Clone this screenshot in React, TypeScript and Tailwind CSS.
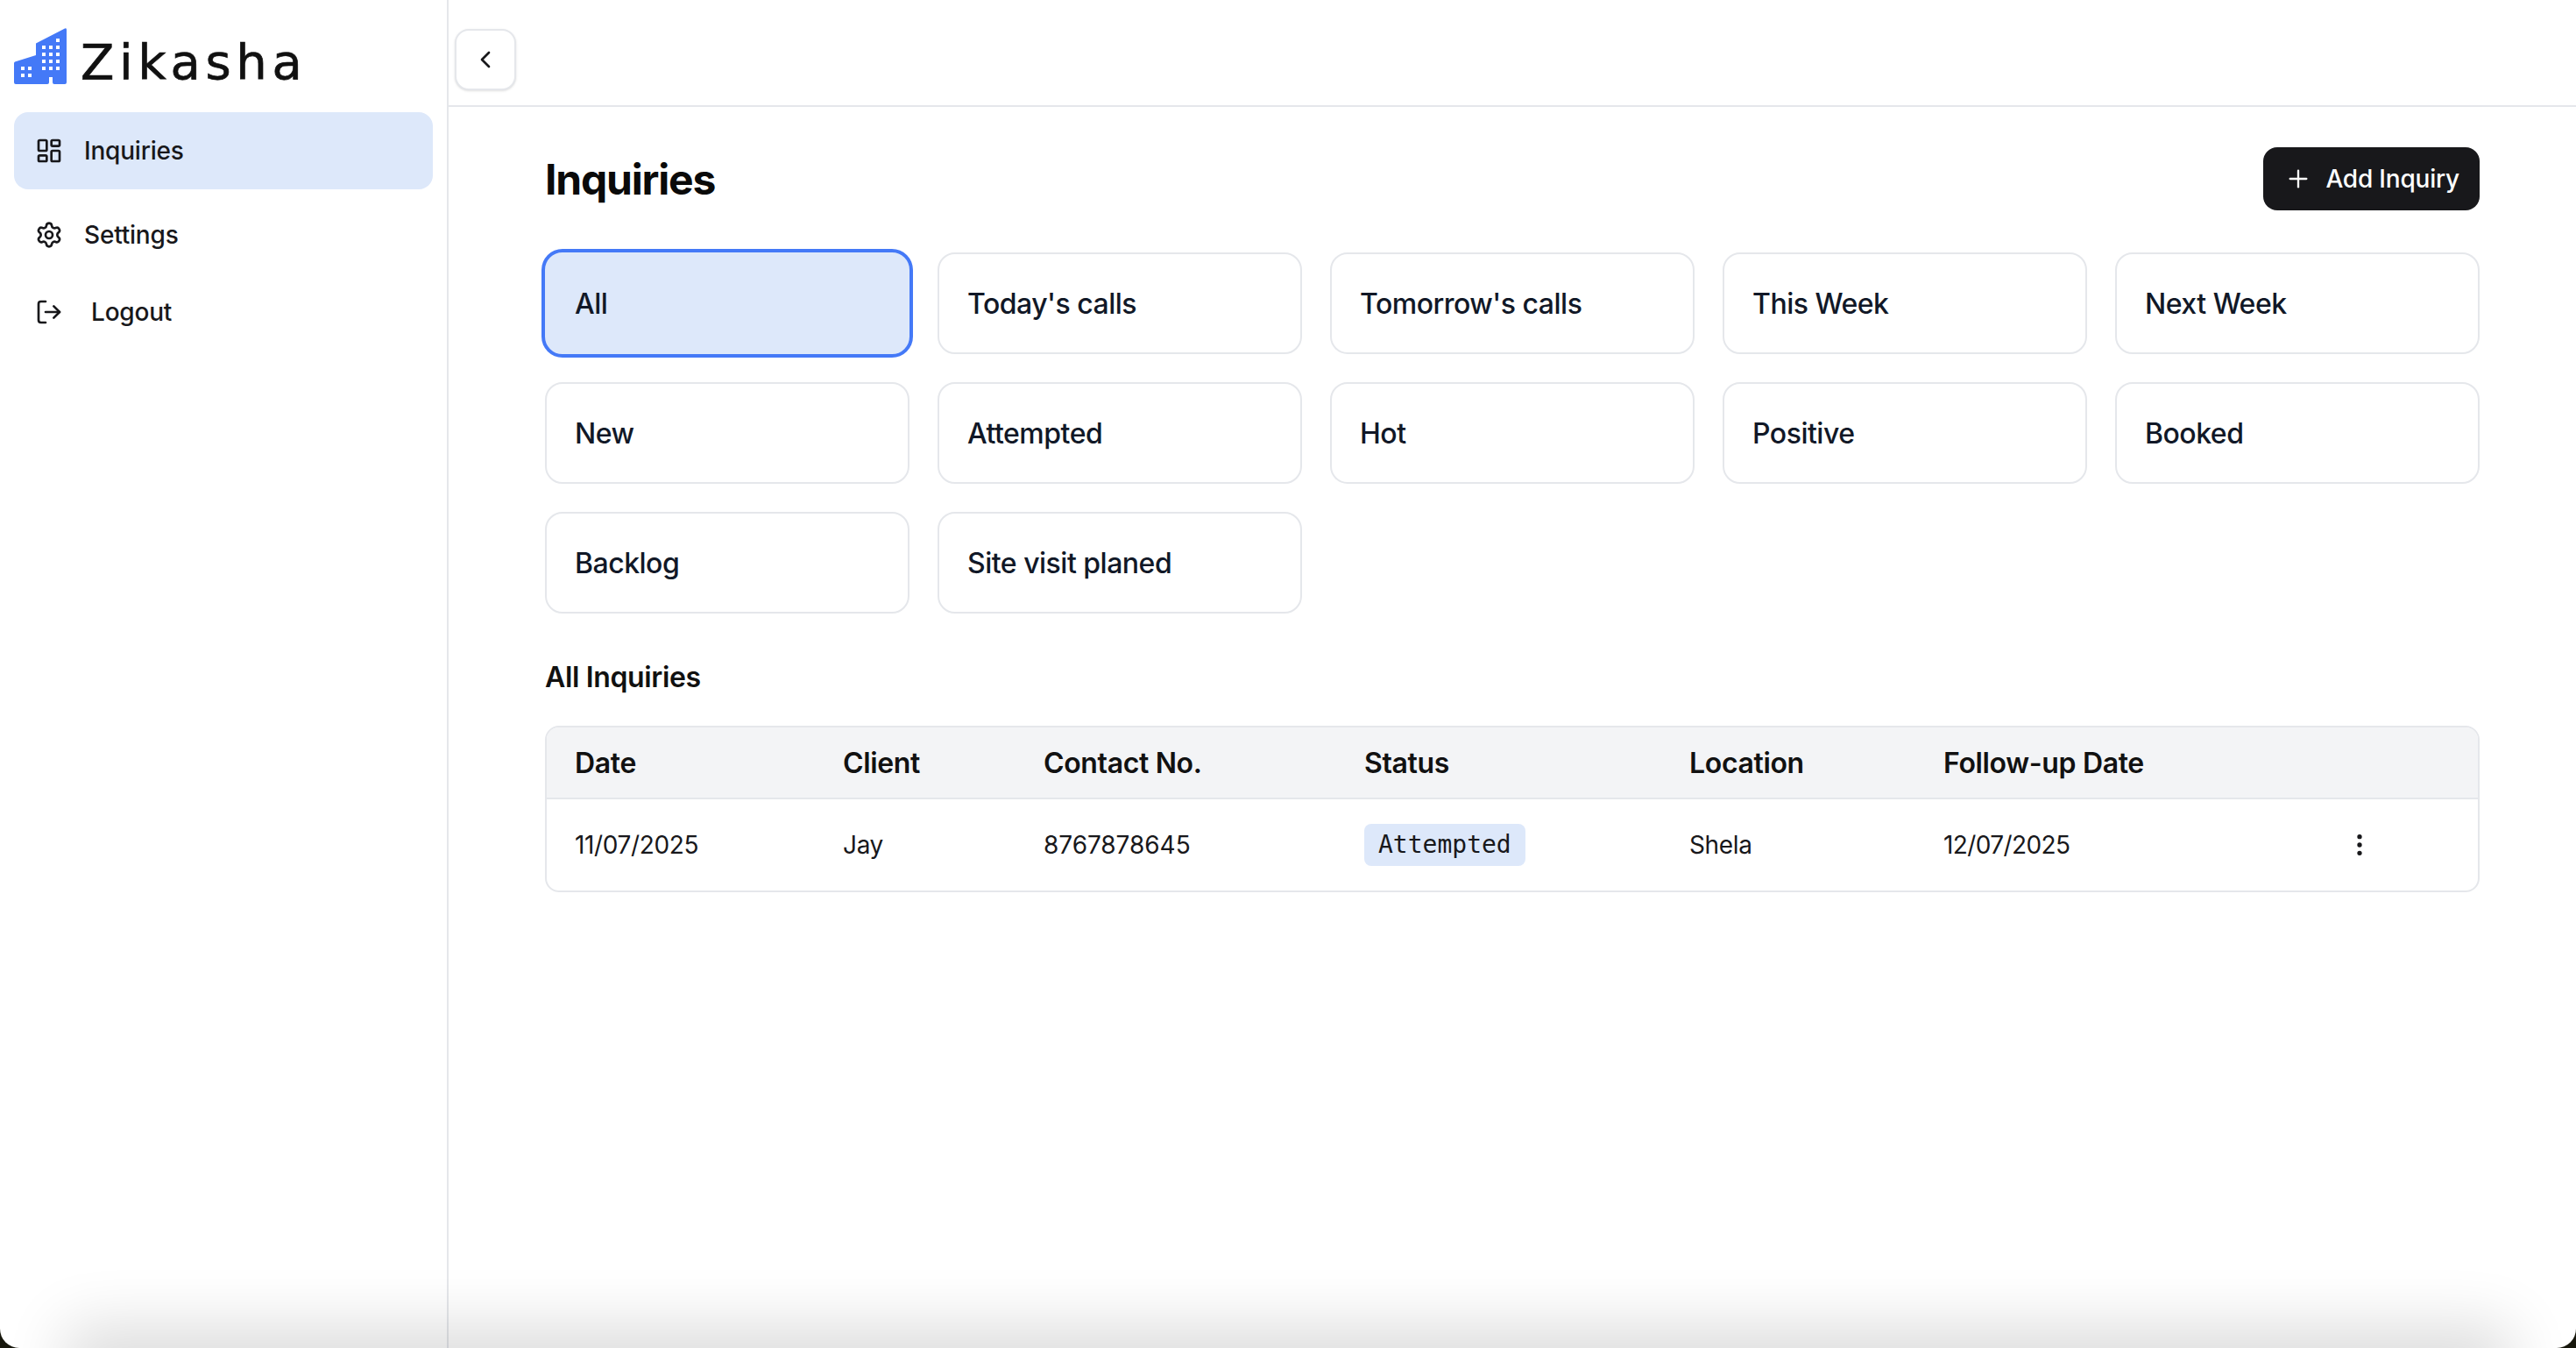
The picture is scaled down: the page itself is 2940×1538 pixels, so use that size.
import { ChevronLeft, EllipsisVertical, LayoutDashboard, LogOut, Plus, Settings } from "lucide-react";

const filters = [
  "All",
  "Today's calls",
  "Tomorrow's calls",
  "This Week",
  "Next Week",
  "New",
  "Attempted",
  "Hot",
  "Positive",
  "Booked",
  "Backlog",
  "Site visit planed",
];

function Logo() {
  const tall = [52, 60, 68, 76].flatMap((y) => [48, 56, 64].map((x) => [x, y]));
  const low = [76, 84].flatMap((y) => [24, 32].map((x) => [x, y]));
  return (
    <svg viewBox="16 30 62 68" className="w-[62px] h-[68px] shrink-0">
      <path
        d="M17 70.5 L41 63 V49.5 L74 32.5 Q76 31.5 76 34 V94 Q76 96 74 96 H62 Q60 96 60 94 V88 H56 V94 Q56 96 54 96 H18 Q16 96 16 94 V72 Q16 71 17 70.5 Z"
        fill="#4479f7"
      />
      <rect x={64} y={44} width={4} height={4} fill="#fff" />
      {[...tall, ...low].map(([x, y]) => (
        <rect key={`${x}-${y}`} x={x} y={y} width={4} height={4} fill="#fff" />
      ))}
    </svg>
  );
}

function Sidebar() {
  return (
    <aside className="w-[512px] shrink-0 border-r-2 border-[#e5e7eb] px-4 text-[28px] font-medium tracking-[-0.2px] text-[#18181b]">
      <div className="h-[128px] flex items-start pt-[30px] gap-[14px]">
        <Logo />
        <span className="mt-[7px] text-[56px] font-['DejaVu_Sans',sans-serif] font-normal leading-[68px] tracking-[5.7px] text-[#111] [-webkit-text-stroke:0.7px_#111]">
          Zikasha
        </span>
      </div>
      <div className="h-[88px] flex items-center gap-6 px-6 rounded-[16px] bg-[#dde8fa]">
        <LayoutDashboard className="w-8 h-8" strokeWidth={2} />
        <span>Inquiries</span>
      </div>
      <div className="h-[88px] mt-2 flex items-center gap-6 px-6">
        <Settings className="w-8 h-8" strokeWidth={2} />
        <span>Settings</span>
      </div>
      <div className="h-[88px] flex items-center gap-8 px-6">
        <LogOut className="w-8 h-8" strokeWidth={2} />
        <span>Logout</span>
      </div>
    </aside>
  );
}

function FilterCard({ label, active }: { label: string; active: boolean }) {
  return (
    <div
      className={
        active
          ? "h-[116px] flex items-center px-8 pt-[2px] rounded-[20px] border-2 border-[#dde8fa] ring-4 ring-[#4479f7] bg-[#dde8fa] text-[32px] font-medium tracking-[-0.5px] text-[#111827]"
          : "h-[116px] flex items-center px-8 pt-[2px] rounded-[20px] border-2 border-[#e5e7eb] bg-white text-[32px] font-medium tracking-[-0.5px] text-[#111827]"
      }
    >
      {label}
    </div>
  );
}

function InquiryTable() {
  return (
    <div className="rounded-[16px] border-2 border-[#e5e7eb] overflow-hidden">
      <table className="w-full table-fixed">
        <thead>
          <tr className="h-[81px] bg-[#f3f4f6] border-b-2 border-[#e5e7eb] text-left text-[32px] tracking-[-0.35px] text-[#111]">
            <th className="w-[306px] pl-8 pt-[2px] font-semibold">Date</th>
            <th className="w-[229px] pl-8 pt-[2px] font-semibold">Client</th>
            <th className="w-[366px] pl-8 pt-[2px] font-semibold">Contact No.</th>
            <th className="w-[371px] pl-8 pt-[2px] font-semibold">Status</th>
            <th className="w-[290px] pl-8 pt-[2px] font-semibold">Location</th>
            <th className="w-[450px] pl-8 pt-[2px] font-semibold">Follow-up Date</th>
            <th />
          </tr>
        </thead>
        <tbody>
          <tr className="h-[105px] text-[28px] tracking-[-0.35px] text-[#18181b]">
            <td className="pl-8">11/07/2025</td>
            <td className="pl-8">Jay</td>
            <td className="pl-8 tracking-[-0.05px]">8767878645</td>
            <td className="pl-8">
              <span className="inline-block px-4 h-[48px] leading-[48px] rounded-lg bg-[#dde8fa] font-['DejaVu_Sans_Mono',monospace] text-[28px] tracking-normal text-[#18181b]">
                Attempted
              </span>
            </td>
            <td className="pl-8">Shela</td>
            <td className="pl-8 tracking-[-0.6px]">12/07/2025</td>
            <td className="pl-[41px]">
              <EllipsisVertical className="w-8 h-8" />
            </td>
          </tr>
        </tbody>
      </table>
    </div>
  );
}

export default function App() {
  return (
    <div className="h-[1538px] bg-[#17170c] overflow-hidden font-['Inter',sans-serif]">
      <div className="relative h-full flex bg-white rounded-b-[22px] overflow-hidden">
        <Sidebar />

        <main className="flex-1 min-w-0">
          <header className="h-[122px] border-b-2 border-[#e5e7eb] pl-[7px] pt-[33px]">
            <button className="w-[70px] h-[70px] flex items-center justify-center rounded-[16px] border-2 border-[#e5e7eb] bg-white shadow-sm text-[#18181b]">
              <ChevronLeft className="w-8 h-8" />
            </button>
          </header>

          <div className="pl-[110px] pr-[110px] pt-[46px]">
            <div className="h-[72px] flex items-center justify-between">
              <h1 className="pt-[2px] text-[48px] font-bold tracking-[-1.2px] text-[#0a0a0a] leading-[70px]">Inquiries</h1>
              <button className="h-[72px] flex items-center gap-[15px] pl-6 pr-[23px] rounded-[16px] bg-[#18181b] text-white text-[28px] font-medium tracking-[-0.2px]">
                <Plus className="w-8 h-8" strokeWidth={1.75} />
                Add Inquiry
              </button>
            </div>

            <div className="mt-[48px] grid grid-cols-5 gap-8">
              {filters.map((label, i) => (
                <FilterCard key={label} label={label} active={i === 0} />
              ))}
            </div>

            <h2 className="mt-[53px] mb-[35px] text-[32px] leading-[40px] font-semibold tracking-[-0.35px] text-[#111]">
              All Inquiries
            </h2>
            <InquiryTable />
          </div>
        </main>

        {/* soft window shadow coming up from the bottom edge */}
        <div className="absolute left-[100px] right-[100px] top-full h-[40px] shadow-[0_0_70px_25px_rgba(0,0,0,0.14)] pointer-events-none" />
      </div>
    </div>
  );
}
